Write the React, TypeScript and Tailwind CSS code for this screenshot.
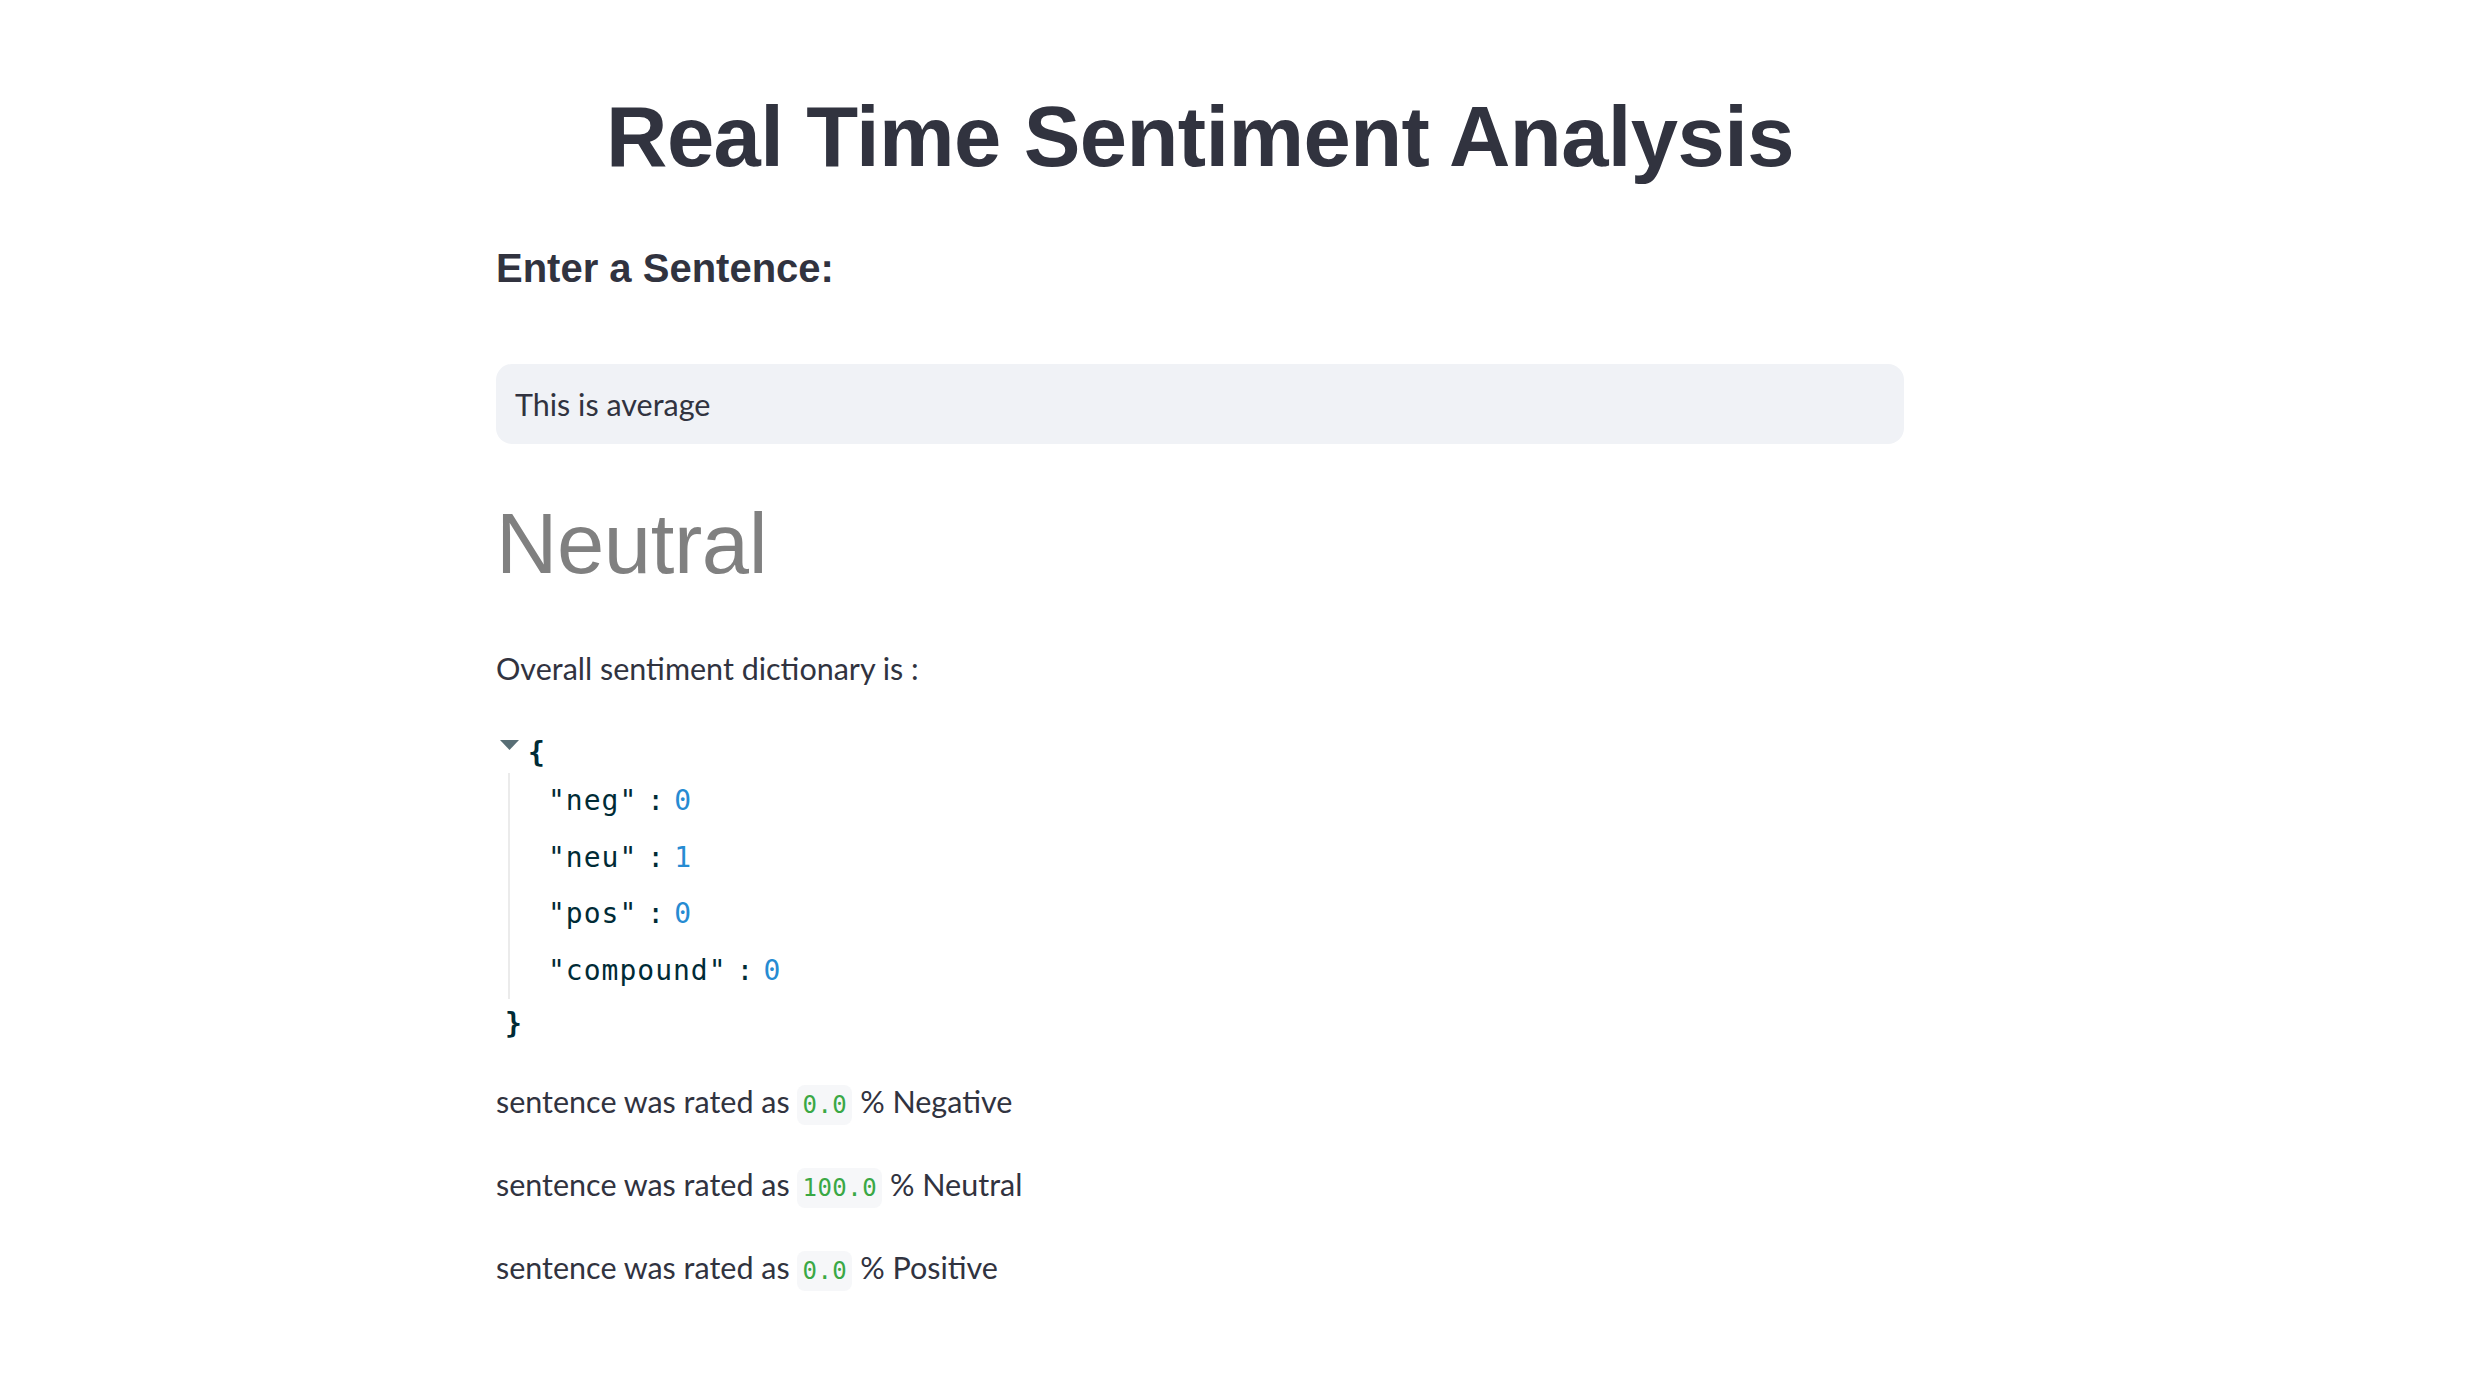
import React from "react";

const scores = { neg: 0, neu: 1, pos: 0, compound: 0 };

const ratings = [
  { value: "0.0", label: "Negative" },
  { value: "100.0", label: "Neutral" },
  { value: "0.0", label: "Positive" },
];

const body = "font-['Lato','Noto_Sans',sans-serif]";
const heading = "font-['Liberation_Sans','Arial',sans-serif]";
const mono = "font-['DejaVu_Sans_Mono','Liberation_Mono',monospace]";

export default function App() {
  return (
    <div className="min-h-screen bg-white pr-[70px] text-[#31333F]">
      <main className="mx-auto w-[1408px] pt-[87px] pb-[80px]">
        {/* Title */}
        <h1
          className={`${heading} text-center text-[85px] leading-[100px] font-bold tracking-[-0.6px]`}
        >
          Real Time Sentiment Analysis
        </h1>

        <h3 className={`${heading} mt-[57px] text-[40px] leading-[48px] font-bold`}>
          Enter a Sentence:
        </h3>

        {/* Input */}
        <div className="mt-[72px] h-[80px] rounded-[16px] bg-[#F0F2F6] flex items-center pl-[19px]">
          <span className={`${body} text-[30.5px] leading-[40px]`}>
            This is average
          </span>
        </div>

        {/* Result */}
        <h1
          className={`${heading} mt-[50px] text-[85px] leading-[100px] font-normal text-[#808080] tracking-[-0.4px]`}
        >
          Neutral
        </h1>

        <p className={`${body} mt-[50px] text-[30.5px] leading-[48px]`}>
          Overall sentiment dictionary is :
        </p>

        {/* JSON viewer */}
        <div className={`${mono} mt-[41px] text-[28px] text-[#002b36]`}>
          <div className="flex items-center h-[40px]">
            <svg width="19" height="10" viewBox="0 0 19 10" className="ml-[4px] -mt-[16px]">
              <polygon points="0,0 19,0 9.5,10" fill="#586e75" />
            </svg>
            <span className="ml-[9px] font-bold">{"{"}</span>
          </div>
          <div className="ml-[12px] border-l-2 border-[#ebebeb] pl-[38px]">
            {Object.entries(scores).map(([key, value]) => (
              <div key={key} className="h-[56.5px] flex items-center whitespace-pre">
                <span className="tracking-[1px]">"{key}"</span>
                <span className="mx-[10px]">:</span>
                <span className="text-[#268bd2]">{value}</span>
              </div>
            ))}
          </div>
          <div className="mt-[5px] h-[40px] flex items-center pl-[9px] font-bold">
            {"}"}
          </div>
        </div>

        {/* Ratings */}
        <div className="mt-[33px] flex flex-col gap-[35px]">
          {ratings.map((r) => (
            <p key={r.label} className={`${body} text-[30.5px] leading-[48px]`}>
              sentence was rated as{" "}
              <code
                className={`${mono} inline-block text-[24px] leading-[40px] px-[5px] rounded-[8px] bg-[#f6f7f9] text-[#3aa845] tracking-[0.5px]`}
              >
                {r.value}
              </code>{" "}
              % {r.label}
            </p>
          ))}
        </div>
      </main>
    </div>
  );
}
